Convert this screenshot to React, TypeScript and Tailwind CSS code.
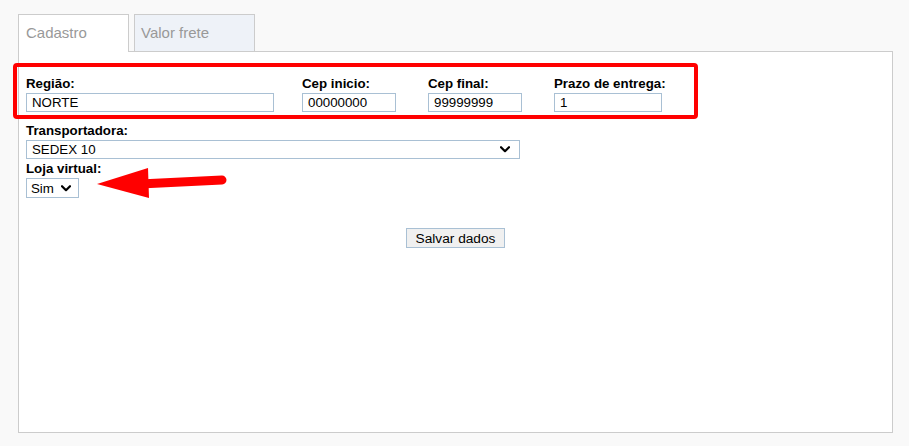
import React from "react";

const Chevron = () => (
  <svg width="10" height="7" viewBox="0 0 10 7" className="shrink-0">
    <path d="M1 1.2 L5 5.2 L9 1.2" fill="none" stroke="#000" strokeWidth="2.2" strokeLinecap="round" strokeLinejoin="round" />
  </svg>
);

const Field = ({ label, value, colW, inputW }: { label: string; value: string; colW: string; inputW: string }) => (
  <div className={`${colW} flex flex-col`}>
    <label className="text-[13.3px] leading-[15px] font-bold text-black">{label}</label>
    <div className={`${inputW} mt-[2px] h-[19px] border border-[#a9c0d4] bg-white pl-[5px] text-[13.3px] leading-[17px] text-black`}>{value}</div>
  </div>
);

export default function App() {
  return (
    <div className="relative min-h-screen bg-[#f9f9f9]" style={{ fontFamily: '"Liberation Sans", Arial, sans-serif' }}>
      <div className="pt-[14px] pl-[18px]">
        <div className="flex items-start">
          <div className="relative z-10 -mb-px h-[38px] w-[111px] border border-b-0 border-[#cccccc] bg-white pl-[7px] pt-[9px] text-[15px] leading-[17px] text-[#999999]">
            Cadastro
          </div>
          <div className="ml-[5px] h-[37px] w-[121px] border border-b-0 border-[#cccccc] bg-[#eef2f8] pl-[6px] pt-[9px] text-[15px] leading-[17px] text-[#999999]">
            Valor frete
          </div>
        </div>
        <div className="h-[382px] w-[875px] border border-[#cccccc] bg-white pl-[7px] pt-[24px]">
          <div className="flex">
            <Field label="Região:" value="NORTE" colW="w-[276px]" inputW="w-[248px]" />
            <Field label="Cep inicio:" value="00000000" colW="w-[126px]" inputW="w-[94px]" />
            <Field label="Cep final:" value="99999999" colW="w-[126px]" inputW="w-[94px]" />
            <Field label="Prazo de entrega:" value="1" colW="w-[140px]" inputW="w-[108px]" />
          </div>
          <div className="mt-[11px] flex flex-col">
            <label className="text-[13.3px] leading-[15px] font-bold text-black">Transportadora:</label>
            <div className="mt-[2px] flex h-[19px] w-[494px] items-center justify-between border border-[#a9c0d4] bg-white pl-[5px] pr-[9px] text-[13.3px] leading-[17px] text-black">
              <span>SEDEX 10</span>
              <Chevron />
            </div>
          </div>
          <div className="mt-[2px] flex flex-col">
            <label className="text-[13.3px] leading-[15px] font-bold text-black">Loja virtual:</label>
            <div className="mt-[2px] flex h-[20px] w-[53px] items-center justify-between border border-[#a9c0d4] bg-white pl-[4px] pr-[7px] text-[13.3px] leading-[17px] text-black">
              <span>Sim</span>
              <Chevron />
            </div>
          </div>
          <div className="mt-[30px] flex justify-center pr-[7px]">
            <button className="h-[20px] w-[99px] border border-[#a9c0d4] bg-[#f0f0f0] text-[13.7px] leading-[17px] text-black">
              Salvar dados
            </button>
          </div>
        </div>
      </div>

      <div className="pointer-events-none absolute left-[13px] top-[63px] h-[56px] w-[685px] rounded-[4px] border-[4px] border-[#ff0000]" />
      <svg className="pointer-events-none absolute left-0 top-0" width="909" height="446" viewBox="0 0 909 446">
        <polygon points="97,184 148,168 149,198" fill="#ff0000" />
        <line x1="140" y1="184" x2="222" y2="180" stroke="#ff0000" strokeWidth="9" strokeLinecap="round" />
      </svg>
    </div>
  );
}
